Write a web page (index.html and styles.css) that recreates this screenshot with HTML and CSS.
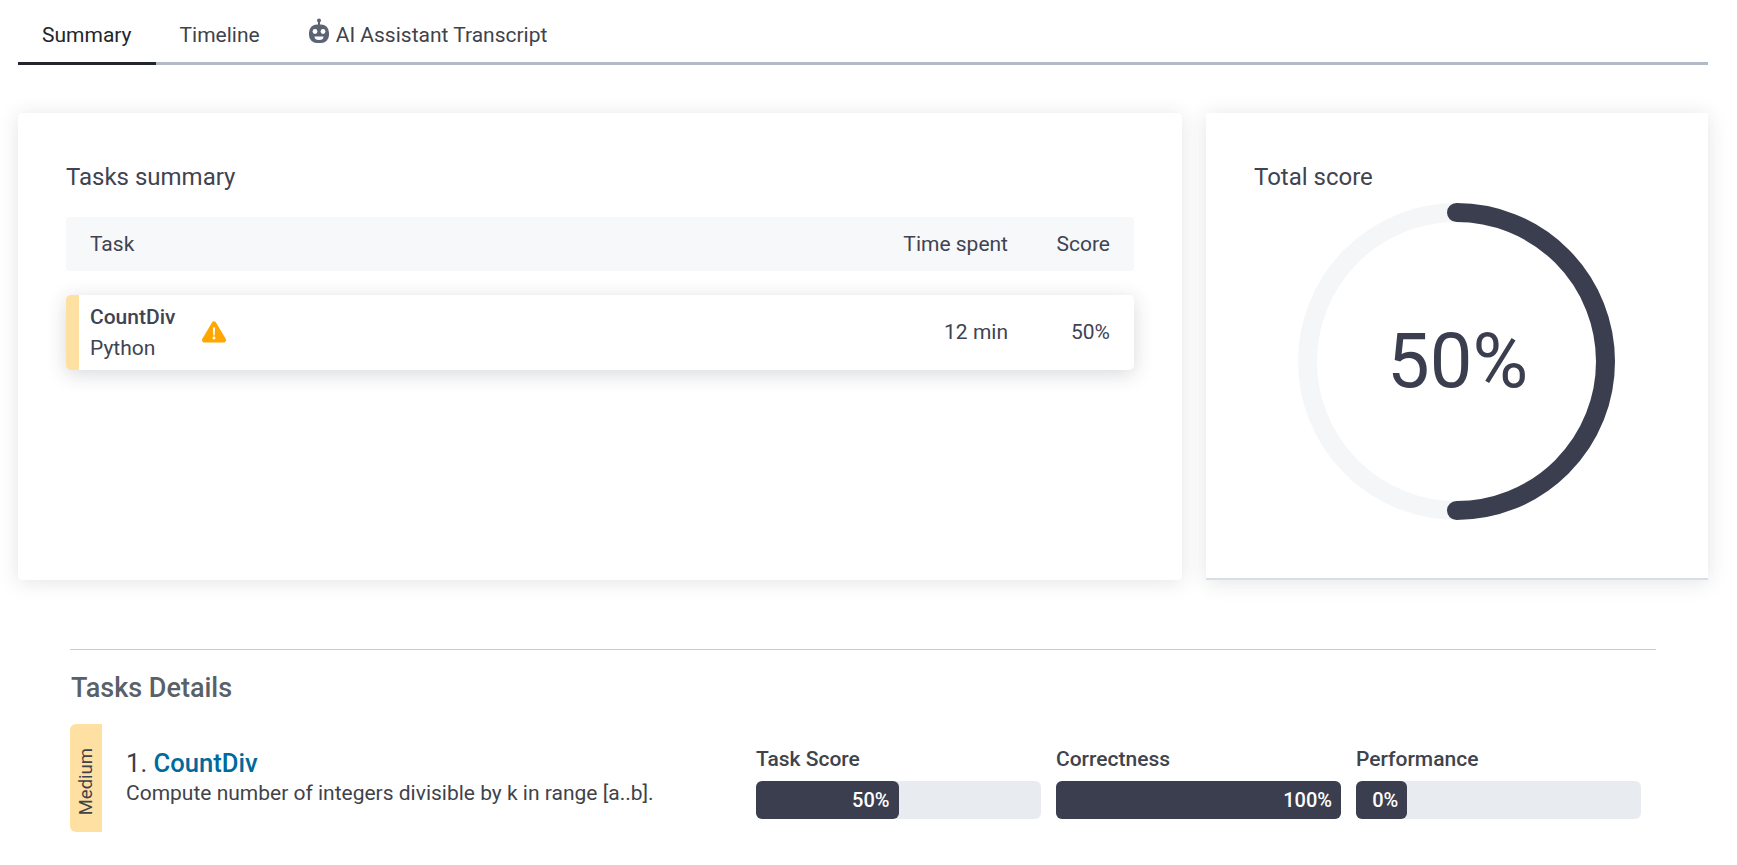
FILE: index.html
```html
<!DOCTYPE html>
<html lang="en">
<head>
<meta charset="utf-8">
<title>Report</title>
<link rel="stylesheet" href="styles.css">
</head>
<body>
<nav class="tabs">
  <a class="tab tab-active">Summary</a>
  <a class="tab">Timeline</a>
  <a class="tab">
    <svg class="robot" viewBox="0 0 22 26" width="22" height="26" aria-hidden="true">
      <circle cx="11" cy="2.5" r="2" fill="#5a6472"/>
      <rect x="10" y="3" width="2" height="5" fill="#5a6472"/>
      <rect x="1" y="6.5" width="20" height="18.5" rx="8" fill="#5a6472"/>
      <circle cx="7" cy="13.5" r="2.4" fill="#fff"/>
      <circle cx="15" cy="13.5" r="2.4" fill="#fff"/>
      <path d="M6.5 18.5h9a4.5 3.5 0 0 1-9 0z" fill="#fff"/>
    </svg>
    AI Assistant Transcript
  </a>
</nav>

<section class="cards">
  <div class="card card-summary">
    <h2 class="card-title">Tasks summary</h2>
    <div class="table-head">
      <span class="col-task">Task</span>
      <span class="col-time">Time spent</span>
      <span class="col-score">Score</span>
    </div>
    <div class="table-row">
      <div class="col-task row-task">
        <div class="row-names">
          <strong class="row-name">CountDiv</strong>
          <span class="row-lang">Python</span>
        </div>
        <svg class="warn" viewBox="0 0 24 22" width="24" height="22" aria-hidden="true">
          <path d="M12 3 L21.5 19 H2.5 Z" fill="#ffa600" stroke="#ffa600" stroke-width="5" stroke-linejoin="round"/>
          <path d="M10.9 6.5h2.2l-.4 8h-1.4z" fill="#fff"/>
          <circle cx="12" cy="17" r="1.4" fill="#fff"/>
        </svg>
      </div>
      <span class="col-time">12 min</span>
      <span class="col-score">50%</span>
    </div>
  </div>

  <div class="card card-total">
    <h2 class="card-title">Total score</h2>
    <div class="donut">
      <svg viewBox="0 0 317 317" width="317" height="317" aria-hidden="true">
        <circle cx="158.5" cy="158.5" r="149" fill="none" stroke="#f5f6f8" stroke-width="19"/>
        <path d="M158.5 9.5 A149 149 0 0 1 158.5 307.5" fill="none" stroke="#3a3e4e" stroke-width="19" stroke-linecap="round"/>
      </svg>
      <span class="donut-value">50%</span>
    </div>
  </div>
</section>

<section class="details">
  <h2 class="details-title">Tasks Details</h2>
  <div class="task">
    <div class="difficulty"><span>Medium</span></div>
    <div class="task-info">
      <h3 class="task-name">1. <a class="task-link">CountDiv</a></h3>
      <p class="task-desc">Compute number of integers divisible by k in range [a..b].</p>
    </div>
    <div class="metrics">
      <div class="metric">
        <div class="metric-label">Task Score</div>
        <div class="bar"><div class="bar-fill" style="width:50%">50%</div></div>
      </div>
      <div class="metric">
        <div class="metric-label">Correctness</div>
        <div class="bar"><div class="bar-fill" style="width:100%">100%</div></div>
      </div>
      <div class="metric">
        <div class="metric-label">Performance</div>
        <div class="bar"><div class="bar-fill bar-fill-min" style="width:18%">0%</div></div>
      </div>
    </div>
  </div>
</section>
</body>
</html>
```

FILE: styles.css
```css
* { box-sizing: border-box; }
html, body { height: 100%; }
body {
  margin: 0;
  padding: 0 29px 0 18px;
  background: #fff;
  font-family: Roboto, "Liberation Sans", sans-serif;
  color: #3a3e4e;
  overflow: hidden;
}
.tabs {
  display: flex;
  height: 65px;
  border-bottom: 3px solid #b1bac9;
}
.tab {
  display: flex;
  align-items: center;
  gap: 6px;
  height: 65px;
  padding: 4px 24px 0;
  font-size: 21px;
  color: #3f434a;
  white-space: nowrap;
}
.tab-active {
  padding-top: 7px;
  color: #22262c;
  border-bottom: 3px solid #22262c;
}
.robot { margin-top: -8px; }
.cards {
  display: flex;
  gap: 24px;
  margin-top: 48px;
  height: 467px;
}
.card {
  background: #fff;
  box-shadow: 0 2px 20px rgba(40, 45, 60, 0.13);
  border-radius: 4px;
}
.card-summary {
  flex: 0 0 1164px;
  padding: 50px 48px;
}
.card-total {
  flex: 1;
  padding: 50px 48px;
  border-bottom: 2px solid #d9dee5;
  border-radius: 0;
  position: relative;
}
.card-title {
  margin: 0;
  font-size: 24px;
  font-weight: 400;
  line-height: 28px;
  color: #3f4352;
}
.table-head, .table-row {
  display: flex;
  align-items: center;
  font-size: 21px;
  color: #3f4352;
}
.table-head {
  height: 54px;
  margin-top: 26px;
  padding: 0 24px 1px 24px;
  background: #f7f8fa;
  border-radius: 3px;
}
.table-row {
  height: 75px;
  margin-top: 24px;
  padding: 0 24px 1px 11px;
  background: #fff;
  border-left: 13px solid #ffe0a3;
  border-radius: 5px;
  box-shadow: 0 4px 20px rgba(40, 45, 60, 0.18);
}
.col-task { flex: 1; }
.col-time { width: 140px; text-align: right; }
.col-score { width: 102px; text-align: right; }
.row-task {
  display: flex;
  align-items: center;
  gap: 27px;
}
.row-names {
  display: flex;
  flex-direction: column;
  gap: 5px;
  line-height: 26px;
}
.row-name { font-weight: 500; }
.warn { margin-top: 0; }
.donut {
  position: absolute;
  left: 92px;
  top: 90px;
  width: 317px;
  height: 317px;
}
.donut svg { display: block; }
.donut-value {
  position: absolute;
  inset: 0;
  display: flex;
  align-items: center;
  justify-content: center;
  padding: 0 0 2px 2px;
  font-size: 76px;
  font-weight: 400;
  color: #3a3e4e;
}
.details {
  margin: 69px 52px 0 52px;
  border-top: 1px solid #ccc;
  padding-top: 22px;
}
.details-title {
  margin: 0 0 0 1px;
  font-size: 27px;
  line-height: 32px;
  font-weight: 500;
  color: #5a6068;
}
.task {
  display: flex;
  align-items: center;
  height: 108px;
  margin-top: 20px;
}
.difficulty {
  flex: 0 0 32px;
  height: 108px;
  display: flex;
  align-items: center;
  justify-content: center;
  padding-top: 8px;
  background: #ffe0a3;
  border-radius: 6px 0 0 6px;
  font-size: 18.5px;
  color: #3f434a;
}
.difficulty span {
  writing-mode: vertical-rl;
  transform: rotate(180deg);
}
.task-info {
  flex: 0 0 654px;
  padding: 0 0 3px 24px;
}
.task-name {
  margin: 0;
  font-size: 25.6px;
  line-height: 30px;
  font-weight: 400;
  color: #3a3e4e;
}
.task-link {
  font-weight: 500;
  color: #006a9c;
}
.task-desc {
  margin: 2px 0 0;
  font-size: 21px;
  line-height: 26px;
  color: #3f434a;
}
.metrics {
  display: flex;
  gap: 15px;
  margin-top: 10px;
}
.metric { width: 285px; }
.metric-label {
  font-size: 21px;
  font-weight: 500;
  line-height: 24px;
  color: #3f434a;
}
.bar {
  height: 38px;
  margin-top: 10px;
  background: #e8ecf1;
  border-radius: 6px;
}
.bar-fill {
  height: 100%;
  display: flex;
  align-items: center;
  justify-content: flex-end;
  padding-right: 9px;
  background: #3a3e4e;
  border-radius: 6px;
  color: #fff;
  font-size: 20px;
  font-weight: 500;
}
```
